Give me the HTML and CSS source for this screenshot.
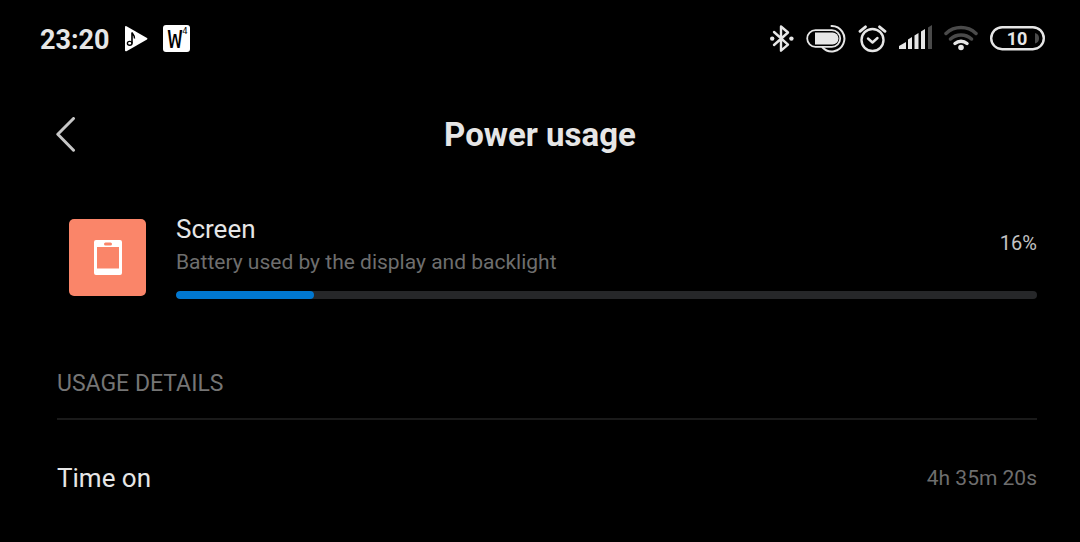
FILE: index.html
```html
<!DOCTYPE html>
<html lang="en">
<head>
<meta charset="UTF-8" />
<meta name="viewport" content="width=device-width, initial-scale=1" />
<title>Power usage</title>
<link rel="stylesheet" href="styles.css">
</head>
<body>
<div class="status-bar">
  <div class="status-left">
    <span class="clock">23:20</span>
    <svg width="23" height="28" viewBox="0 0 23 28" aria-hidden="true">
      <path fill="#fff" d="M0 2.2Q0 .6 1.5 1.3L22 13Q23 13.8 22 14.6L1.5 26.2Q0 26.8 0 25.2z"/>
      <ellipse cx="4.7" cy="18.3" rx="2.3" ry="1.9" fill="none" stroke="#000" stroke-width="1.4"/>
      <path fill="none" stroke="#000" stroke-width="1.6" d="M7 18.5V7.5C7.5 10 10.2 10 9.4 13.5"/>
    </svg>
    <svg width="27" height="28" viewBox="0 0 27 28" aria-hidden="true">
      <rect width="27" height="27" rx="3" fill="#fff"/>
      <text class="badge-letter" x="12" y="23">W</text>
      <text class="badge-number" x="22" y="9">4</text>
    </svg>
  </div>
  <div class="status-right">
    <svg width="24" height="28" viewBox="0 0 24 28" aria-hidden="true">
      <path class="line" stroke-width="2.4" d="M4 7l14 12.7-7 6V1.5l7 6L4 20"/>
      <circle cx="2.2" cy="13.6" r="2.2"/>
      <circle cx="21.4" cy="13.6" r="2.2"/>
    </svg>
    <svg width="40" height="28" viewBox="0 0 40 28" aria-hidden="true">
      <path class="line" stroke-width="2" d="M25.5 1A12.7 12.7 0 1 1 16.500 22.5"/>
      <rect x="1.2" y="5.2" width="33" height="16.6" rx="8.3" fill="#000" stroke="#e6e6e6" stroke-width="1.8"/>
      <path d="M9 7.5h17.500a6 6 0 0 1 0 12H9z"/>
    </svg>
    <svg width="29" height="28" viewBox="0 0 29 28" aria-hidden="true">
      <circle class="line" cx="14.5" cy="15" r="11" stroke-width="2.4"/>
      <path class="line" stroke-width="2.4" d="M10 13.5l4.5 4 5-4.5"/>
      <path class="line" stroke-width="2.8" d="M2 6.3l5.5-4.5M27 6.3l-5.500-4.5"/>
    </svg>
    <svg width="33" height="28" viewBox="0 0 33 28" aria-hidden="true">
      <path d="M0 24v-3l7-4v7zM9 24V14.5L13 12v12zM15.5 24V10.5l4-2.500v16zM22 24V6.5L26 4v20z"/>
      <path class="dim" d="M29 24V2.5L33 0v24z"/>
    </svg>
    <svg width="34" height="28" viewBox="0 0 34 28" aria-hidden="true">
      <path class="line dim-line" stroke-width="3.5" d="M2 8.5a22 22 0 0 1 30 0M6.5 14a16 16 0 0 1 21 0"/>
      <path class="line" stroke-width="3.5" d="M11 18.5a9.500 9.5 0 0 1 12 0"/>
      <circle cx="17" cy="22.5" r="2.8"/>
    </svg>
    <svg width="55" height="28" viewBox="0 0 55 28" aria-hidden="true">
      <rect class="line" x="1.2" y="2.2" width="52.6" height="22" rx="11" stroke-width="2.4"/>
      <path class="dim" d="M45 8q4 1 4 5.3t-4 5.3z"/>
      <text class="battery-level" x="27" y="20">10</text>
    </svg>
  </div>
</div>

<header class="title-bar">
  <button class="back" aria-label="Back">
    <svg width="20" height="36" viewBox="0 0 20 36" aria-hidden="true">
      <path fill="none" stroke="#c6c6c6" stroke-width="3" stroke-linecap="round" stroke-linejoin="round" d="M17.5 1.5L1.8 17.2l15.7 16"/>
    </svg>
  </button>
  <h1>Power usage</h1>
</header>

<main>
  <section class="usage">
    <div class="app-icon">
      <svg width="28" height="35" viewBox="0 0 28 35" aria-hidden="true">
        <path fill="#fff" fill-rule="evenodd" d="M2 0h24q2 0 2 2v31q0 2-2 2H2q-2 0-2-2V2Q0 0 2 0zM3 7v21.5h22V7zM11.5 2.5a1.5 1.5 0 0 0 0 3h5a1.5 1.5 0 0 0 0-3z"/>
      </svg>
    </div>
    <div class="usage-body">
      <div class="usage-info">
        <div>
          <label class="usage-name" for="share">Screen</label>
          <p class="usage-desc">Battery used by the display and backlight</p>
        </div>
        <span class="percent">16%</span>
      </div>
      <progress id="share" class="bar" value="16" max="100"></progress>
    </div>
  </section>

  <h2>USAGE DETAILS</h2>
  <dl class="details">
    <dt>Time on</dt>
    <dd>4h 35m 20s</dd>
  </dl>
</main>
</body>
</html>
```
FILE: styles.css
```css
body {
  margin: 0;
  background-color: #000;
  color: #e6e6e6;
  font-family: Roboto, Arial, sans-serif;
}
svg {
  display: block;
  fill: #e6e6e6;
}

/* status bar */
.status-bar {
  display: flex;
  justify-content: space-between;
  align-items: center;
  height: 78px;
  padding: 0 35px 0 40px;
}
.status-left {
  display: flex;
  align-items: center;
  gap: 15px;
}
.status-right {
  display: flex;
  align-items: center;
  gap: 12px;
}
.clock {
  padding-top: 2px;
  font-size: 27px;
  line-height: 32px;
  font-weight: bold;
}
.line {
  fill: none;
  stroke: #e6e6e6;
  stroke-linecap: round;
  stroke-linejoin: round;
}
.dim {
  fill: #4a4a4a;
}
.dim-line {
  stroke: #4a4a4a;
}
.badge-letter,
.badge-number {
  fill: #000;
  font-family: "DejaVu Sans Mono", monospace;
  text-anchor: middle;
}
.badge-letter {
  font-size: 24px;
}
.badge-number {
  font-size: 9px;
}
.battery-level {
  font-size: 18px;
  font-weight: bold;
  text-anchor: middle;
}

/* title */
.title-bar {
  display: grid;
  grid-template-columns: 76px 1fr 76px;
  align-items: center;
  height: 113px;
}
.back {
  padding: 0 0 0 56px;
  border: 0;
  background: none;
  cursor: pointer;
}
h1 {
  margin: 0;
  font-size: 33px;
  line-height: 40px;
  text-align: center;
}

/* content */
main {
  padding: 20px 43px 20px 57px;
}
.usage {
  display: flex;
  align-items: center;
  gap: 30px;
  padding-left: 12px;
}
.app-icon {
  display: flex;
  flex: none;
  align-items: center;
  justify-content: center;
  width: 77px;
  height: 77px;
  margin-top: 4px;
  border-radius: 5px;
  background-color: #fa8569;
}
.usage-body {
  flex: 1;
}
.usage-info {
  display: flex;
  justify-content: space-between;
  align-items: center;
}
.usage-name {
  display: block;
  font-size: 26px;
  line-height: 36px;
}
.usage-desc {
  margin: 0;
  font-size: 21px;
  line-height: 30px;
  color: #6e6e6e;
}
.percent {
  padding-bottom: 2px;
  font-size: 20px;
  color: #c4c4c4;
}
.bar {
  display: block;
  width: 100%;
  height: 8px;
  margin-top: 14px;
  border: 0;
  border-radius: 4px;
  overflow: hidden;
  background-color: #262729;
  -webkit-appearance: none;
  appearance: none;
}
.bar::-webkit-progress-bar {
  background-color: #262729;
}
.bar::-webkit-progress-value {
  border-radius: 4px;
  background-color: #0077d0;
}
h2 {
  margin: 70px 0 0;
  padding-bottom: 19px;
  border-bottom: 2px solid #1a1a1a;
  font-size: 23px;
  line-height: 30px;
  font-weight: normal;
  color: #757575;
}
.details {
  display: flex;
  justify-content: space-between;
  align-items: center;
  margin: 0;
  padding: 40px 0 0;
}
dt {
  font-size: 26px;
  line-height: 36px;
}
dd {
  margin: 0;
  font-size: 21px;
  line-height: 30px;
  color: #6e6e6e;
}
```
